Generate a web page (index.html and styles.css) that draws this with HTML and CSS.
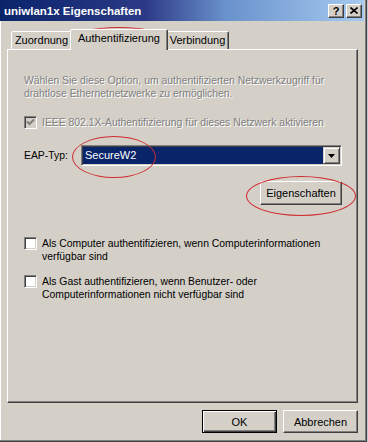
FILE: index.html
```html
<!DOCTYPE html>
<html lang="de">
<head>
  <meta charset="UTF-8">
  <title>uniwlan1x Eigenschaften</title>
  <link rel="stylesheet" href="styles.css">
</head>
<body>
  <div class="window">
    <div class="titlebar">
      <span class="title">uniwlan1x Eigenschaften</span>
      <div class="caption-btns">
        <span class="cap-btn help">?</span>
        <span class="cap-btn close">
          <svg width="8" height="7" viewBox="0 0 8 7"><path d="M0.5 0.5 L7.5 6.5 M7.5 0.5 L0.5 6.5" stroke="#000" stroke-width="1.6"/></svg>
        </span>
      </div>
    </div>

    <div class="client">
      <div class="tabs">
        <div class="tab tab-zuordnung">Zuordnung</div>
        <div class="tab tab-auth active">Authentifizierung</div>
        <div class="tab tab-verbindung">Verbindung</div>
      </div>

      <div class="panel">
        <p class="desc disabled">Wählen Sie diese Option, um authentifizierten Netzwerkzugriff für<br>drahtlose Ethernetnetzwerke zu ermöglichen.</p>

        <label class="check-row ieee disabled">
          <span class="checkbox">
            <svg width="9" height="9" viewBox="0 0 9 9"><path d="M1 3.5 L3.5 6 L8 1.5" fill="none" stroke="#808080" stroke-width="2"/></svg>
          </span>
          <span>IEEE 802.1X-Authentifizierung für dieses Netzwerk aktivieren</span>
        </label>

        <div class="eap-row">
          <span class="eap-label">EAP-Typ:</span>
          <div class="combo">
            <span class="combo-value">SecureW2</span>
            <span class="combo-btn">
              <svg width="7" height="4" viewBox="0 0 7 4"><path d="M0 0 H7 L3.5 4 Z" fill="#000"/></svg>
            </span>
          </div>
        </div>

        <div class="prop-row">
          <button class="btn prop-btn">Eigenschaften</button>
        </div>

        <label class="check-row cb-computer">
          <span class="checkbox"></span>
          <span>Als Computer authentifizieren, wenn Computerinformationen<br>verfügbar sind</span>
        </label>

        <label class="check-row cb-gast">
          <span class="checkbox"></span>
          <span>Als Gast authentifizieren, wenn Benutzer- oder<br>Computerinformationen nicht verfügbar sind</span>
        </label>
      </div>

      <div class="footer">
        <button class="btn default">OK</button>
        <button class="btn">Abbrechen</button>
      </div>
    </div>

    <!-- red marker circles drawn over the dialog -->
    <span class="mark mark-tab"></span>
    <span class="mark mark-combo"></span>
    <span class="mark mark-btn"></span>
  </div>
</body>
</html>
```

FILE: styles.css
```css
body { margin: 0; background: #c4c8d0; font-family: "Liberation Sans", Arial, sans-serif; font-size: 10.4px; color: #000; }

.window { position: relative; width: 367px; height: 442px; box-sizing: border-box; background: #d4d0c8; border-right: 1px solid #404040; border-bottom: 1px solid #404040; box-shadow: inset -1px -1px #808080, inset 1px 0 #ffffff; }

/* title bar */
.titlebar { height: 21px; margin-right: 2px; box-sizing: border-box; padding: 0 2px 0 4px; display: flex; align-items: center; justify-content: space-between; background: linear-gradient(to right, #0a246a 0%, #2c3a86 40%, #6a92cc 62%, #a6caf0 100%); }
.title { color: #fff; font-weight: bold; font-size: 11.5px; }
.caption-btns { display: flex; gap: 2px; }
.cap-btn { width: 16px; height: 14px; box-sizing: border-box; display: flex; align-items: center; justify-content: center; background: #d4d0c8; border: 1px solid; border-color: #fff #404040 #404040 #fff; box-shadow: inset -1px -1px #808080; font-weight: bold; font-size: 11px; line-height: 12px; }

/* tabs */
.client { padding: 8px 0 0 7px; }
.tabs { display: flex; align-items: flex-end; height: 20px; padding-left: 4px; position: relative; z-index: 1; }
.tab { height: 18px; box-sizing: border-box; border: 1px solid; border-bottom: none; border-color: #fff #404040 transparent #fff; border-radius: 2px 2px 0 0; box-shadow: inset -1px 0 #808080; background: #d4d0c8; text-align: center; line-height: 16px; font-size: 11px; }
.tab-zuordnung { width: 61px; }
.tab-auth { width: 94px; }
.tab-verbindung { width: 63px; }
.tab.active { width: 98px; height: 21px; margin: 0 -2px -1px; line-height: 17px; position: relative; z-index: 2; }

/* tab page */
.panel { width: 351px; height: 354px; box-sizing: border-box; border: 1px solid; border-color: #fff #404040 #404040 #fff; box-shadow: inset -1px -1px #808080; padding: 0 15px 0 16px; }
.desc { margin: 24px 0 0; line-height: 13px; }
.disabled { color: #808080; text-shadow: 1px 1px #fff; }

.check-row { display: flex; align-items: flex-start; gap: 5px; line-height: 13px; }
.checkbox { flex: none; width: 13px; height: 13px; box-sizing: border-box; display: flex; align-items: center; justify-content: center; background: #fff; border: 1px solid; border-color: #808080 #fff #fff #808080; box-shadow: inset 1px 1px #404040, inset -1px -1px #d4d0c8; }
.disabled .checkbox { background: #d4d0c8; }
.ieee { margin-top: 16px; }

.eap-row { display: flex; align-items: center; margin-top: 16px; }
.eap-label { width: 57px; }
.combo { width: 261px; height: 21px; box-sizing: border-box; display: flex; padding: 1px; background: #fff; border: 1px solid; border-color: #808080 #fff #fff #808080; box-shadow: inset 1px 1px #404040, inset -1px -1px #d4d0c8; }
.combo-value { flex: 1; background: #0a246a; color: #fff; padding-left: 2px; line-height: 17px; font-size: 11px; }
.combo-btn { width: 17px; height: 17px; box-sizing: border-box; display: flex; align-items: center; justify-content: center; background: #d4d0c8; border: 1px solid; border-color: #d4d0c8 #404040 #404040 #d4d0c8; box-shadow: inset 1px 1px #fff, inset -1px -1px #808080; }

.prop-row { display: flex; justify-content: flex-end; margin-top: 15px; }
.btn { font: inherit; font-size: 11px; color: #000; padding: 0; width: 75px; height: 23px; box-sizing: border-box; background: #d4d0c8; border: 1px solid; border-color: #fff #404040 #404040 #fff; box-shadow: inset -1px -1px #808080; }
.prop-btn { width: 82px; height: 24px; }
.btn.default { border-color: #000; box-shadow: inset 1px 1px #fff, inset -1px -1px #404040, inset -2px -2px #808080; }

.cb-computer { margin-top: 32px; }
.cb-gast { margin-top: 12px; }

.footer { width: 351px; display: flex; justify-content: flex-end; gap: 6px; margin-top: 7px; }

/* red annotation ellipses */
.mark { position: absolute; box-sizing: border-box; border: 1.5px solid #d02c30; border-radius: 50%; pointer-events: none; }
.mark-tab { left: 71px; top: 27px; width: 96px; height: 23px; }
.mark-combo { left: 72px; top: 136px; width: 84px; height: 42px; }
.mark-btn { left: 246px; top: 176px; width: 110px; height: 40px; }
```
